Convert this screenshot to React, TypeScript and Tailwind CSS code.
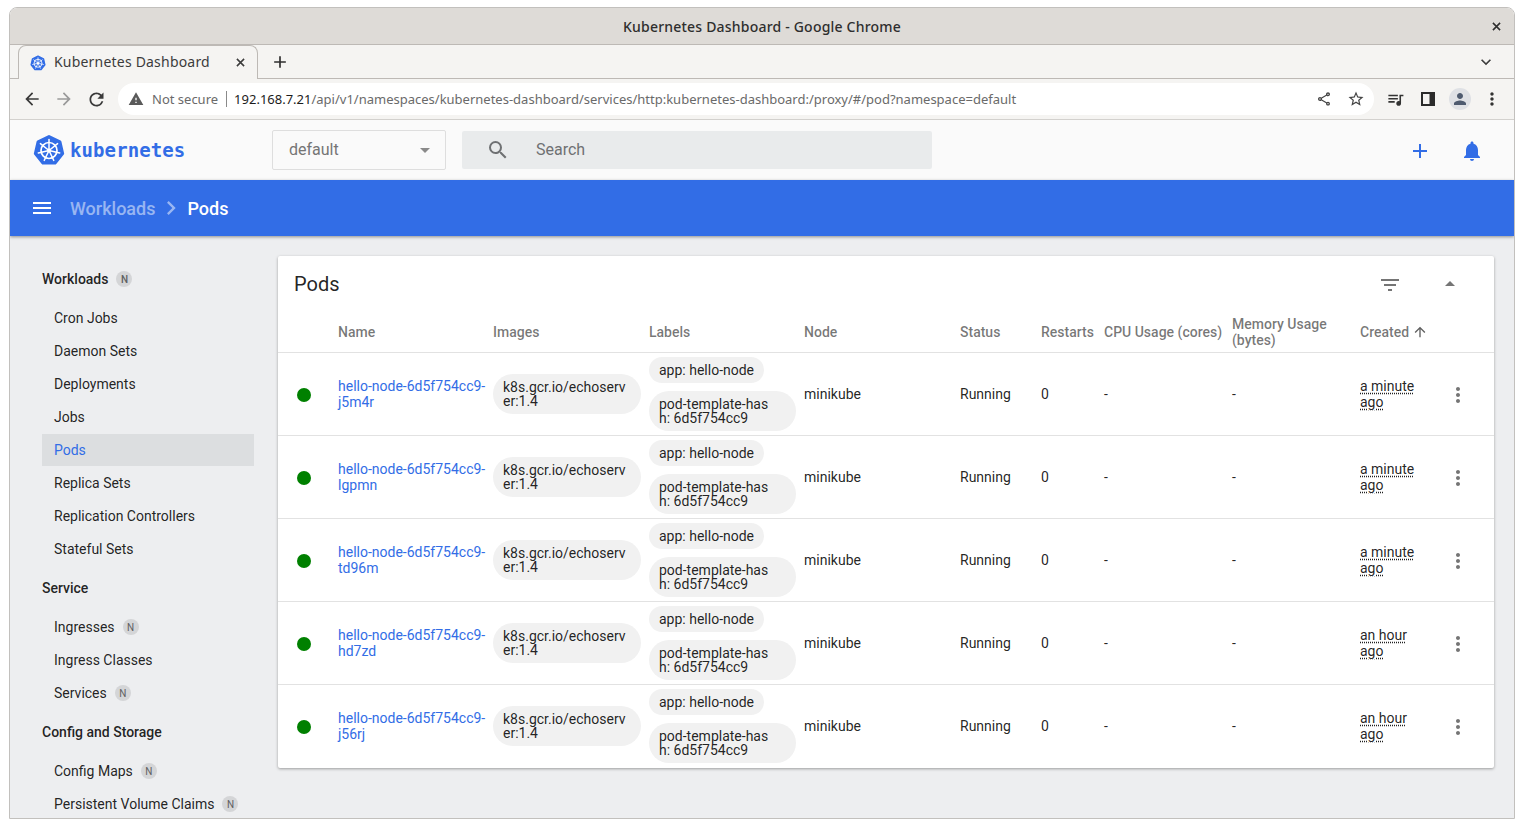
// Kubernetes Dashboard pods page inside a Chrome window
import { ReactNode } from 'react';
import {
  MdAdd,
  MdArrowBack,
  MdArrowDropDown,
  MdArrowDropUp,
  MdArrowForward,
  MdArrowUpward,
  MdChevronRight,
  MdExpandMore,
  MdFilterList,
  MdMenu,
  MdMoreVert,
  MdNotifications,
  MdOutlineShare,
  MdPerson,
  MdQueueMusic,
  MdRefresh,
  MdSearch,
  MdStarBorder,
  MdWarning,
} from 'react-icons/md';

const pods = [
  { suffix: 'j5m4r', age: ['a minute', 'ago'] },
  { suffix: 'lgpmn', age: ['a minute', 'ago'] },
  { suffix: 'td96m', age: ['a minute', 'ago'] },
  { suffix: 'hd7zd', age: ['an hour', 'ago'] },
  { suffix: 'j56rj', age: ['an hour', 'ago'] },
];

const sections = [
  {
    title: 'Workloads',
    badge: true,
    items: [
      { name: 'Cron Jobs' },
      { name: 'Daemon Sets' },
      { name: 'Deployments' },
      { name: 'Jobs' },
      { name: 'Pods', active: true },
      { name: 'Replica Sets' },
      { name: 'Replication Controllers' },
      { name: 'Stateful Sets' },
    ],
  },
  {
    title: 'Service',
    items: [
      { name: 'Ingresses', badge: true },
      { name: 'Ingress Classes' },
      { name: 'Services', badge: true },
    ],
  },
  {
    title: 'Config and Storage',
    items: [
      { name: 'Config Maps', badge: true },
      { name: 'Persistent Volume Claims', badge: true },
    ],
  },
];

const gridCols = 'grid grid-cols-[60px_155px_156px_155px_156px_81px_63px_128px_128px_78px_1fr]';

const heptagon = [0, 1, 2, 3, 4, 5, 6].map((i) => {
  const a = (i * 2 * Math.PI) / 7;
  return `${16 + 14 * Math.sin(a)},${16.5 - 14 * Math.cos(a)}`;
});

function KubeLogo({ size }: { size: number }) {
  return (
    <svg width={size} height={size} viewBox="0 0 32 32">
      <polygon points={heptagon.join(' ')} fill="#326de6" stroke="#326de6" strokeWidth="3" strokeLinejoin="round" />
      <circle cx="16" cy="16.5" r="8" fill="none" stroke="#fff" strokeWidth="1.7" />
      <circle cx="16" cy="16.5" r="2" fill="#fff" />
      {[0, 1, 2, 3, 4, 5, 6].map((i) => {
        const a = (i * 2 * Math.PI) / 7;
        return (
          <line
            key={i}
            x1={16}
            y1={16.5}
            x2={16 + 11 * Math.sin(a)}
            y2={16.5 - 11 * Math.cos(a)}
            stroke="#fff"
            strokeWidth="1.5"
            strokeLinecap="round"
          />
        );
      })}
    </svg>
  );
}

function CloseIcon({ size, className }: { size: number; className?: string }) {
  return (
    <svg className={className} width={size} height={size} viewBox="0 0 10 10" stroke="currentColor" strokeWidth="1.7">
      <path d="M1 1 9 9M9 1 1 9" />
    </svg>
  );
}

function Badge() {
  return (
    <span className="ml-2 flex h-4 w-4 items-center justify-center rounded-full bg-[#d4d5d7] text-[10px] text-[#5f6062]">
      N
    </span>
  );
}

function Chip({ children, className }: { children: ReactNode; className: string }) {
  return (
    <div className={`whitespace-nowrap rounded-[20px] bg-[#f1f1f1] px-2.5 py-[6px] text-[14px] leading-[14px] ${className}`}>
      {children}
    </div>
  );
}

function ChromeFrame() {
  return (
    <div className="font-['Noto_Sans',sans-serif]">
      {/* Title bar */}
      <div className="relative flex h-[37px] items-center justify-center border-b border-[#bdb9b5] bg-[#dedbd7] text-[14px] font-medium tracking-[0.2px] text-[#2e2e2e]">
        Kubernetes Dashboard - Google Chrome
        <CloseIcon className="absolute right-[13px] top-[14px] text-[#2e2e2e]" size={9} />
      </div>
      {/* Tab strip */}
      <div className="flex h-[34px] items-end border-b border-[#bdb9b5] bg-[#f5f4f2] pl-[8px] pr-[18px]">
        <div className="-mb-px flex h-[34px] w-[240px] items-center rounded-t-lg border-x border-t border-[#bdb9b5] bg-[#f5f4f2] pl-[11px] pr-[12px]">
          <KubeLogo size={16} />
          <span className="mb-0.5 ml-2 flex-1 text-[14px] tracking-[0.2px] text-[#3c3c3c]">Kubernetes Dashboard</span>
          <CloseIcon className="text-[#3c3c3c]" size={9} />
        </div>
        <MdAdd className="mb-[6px] ml-[12px] text-[#2e2e2e]" size={20} />
        <div className="flex-1" />
        <MdExpandMore className="mb-[6px] text-[#3c3c3c]" size={20} />
      </div>
      {/* Toolbar */}
      <div className="flex h-[41px] items-center border-b border-[#d3d1ce] bg-[#f5f4f2] pl-[12px] pr-[12px]">
        <MdArrowBack className="text-[#3a3a3a]" size={20} />
        <MdArrowForward className="ml-[12px] text-[#9a9a9a]" size={20} />
        <MdRefresh className="ml-[12px] text-[#3a3a3a]" size={21} />
        <div className="ml-[11px] flex h-8 w-[1256px] shrink-0 items-center rounded-full bg-white pl-[10px] pr-[9px] text-[13px]">
          <MdWarning className="text-[#5a5a5a]" size={16} />
          <span className="ml-[8px] mt-px text-[#6a6a6a]">Not secure</span>
          <span className="ml-[8px] mr-[7px] h-4 w-px bg-[#8a8a8a]" />
          <span className="mt-px text-[#1c1c1c]">192.168.7.21</span>
          <span className="mt-px text-[#6a6a6a]">/api/v1/namespaces/kubernetes-dashboard/services/http:kubernetes-dashboard:/proxy/#/pod?namespace=default</span>
          <div className="flex-1" />
          <MdOutlineShare className="text-[#444]" size={16} />
          <MdStarBorder className="ml-[15px] text-[#444]" size={18} />
        </div>
        <MdQueueMusic className="ml-[12px] text-[#333]" size={19} />
        <svg className="ml-[16px]" width="14" height="14" viewBox="0 0 14 14">
          <rect width="14" height="14" fill="#2b2b2b" />
          <rect x="2" y="2" width="6.5" height="10" fill="#f5f4f2" />
        </svg>
        <div className="ml-[14px] flex h-[22px] w-[22px] items-center justify-center rounded-full bg-[#dfe1e5]">
          <MdPerson className="text-[#4f5b6f]" size={18} />
        </div>
        <MdMoreVert className="ml-[11px] text-[#333]" size={20} />
      </div>
    </div>
  );
}

function AppHeader() {
  return (
    <div className="flex h-[60px] items-center bg-[#fafafa] pl-[23px] pr-[30px]">
      <KubeLogo size={32} />
      <span className="ml-[5px] w-[202px] font-['DejaVu_Sans_Mono',monospace] text-[19px] font-bold tracking-[0.1px] text-[#326de6]">kubernetes</span>
      <div className="flex h-10 w-[174px] items-center rounded-[2px] border border-[#dedede] pl-4 pr-[8px] text-[16px] text-[#757575]">
        <span className="flex-1">default</span>
        <MdArrowDropDown className="text-[#8a8a8a]" size={24} />
      </div>
      <div className="ml-4 flex h-[38px] w-[470px] items-center rounded-[2px] bg-[#e9ebec] pl-[24px] text-[16px] text-[#6f7173]">
        <MdSearch className="text-[#6f7173]" size={24} />
        <span className="ml-[26px]">Search</span>
      </div>
      <div className="flex-1" />
      <MdAdd className="mt-px text-[#326de6]" size={24} />
      <MdNotifications className="ml-[28px] mt-px text-[#326de6]" size={24} />
    </div>
  );
}

function Sidebar() {
  return (
    <div className="w-[268px] shrink-0 pl-8 pt-[27px] text-[14px] text-[#000000de]">
      <div className="w-[212px]">
        {sections.map((s) => (
          <div key={s.title} className="mb-[7px]">
            <div className="mb-[7px] flex h-8 items-center font-medium">
              {s.title}
              {s.badge && <Badge />}
            </div>
            <div className="flex flex-col gap-px">
              {s.items.map((item) => (
                <div
                  key={item.name}
                  className={`flex h-8 items-center whitespace-nowrap pl-3 ${item.active ? 'bg-[#dcdee0] text-[#326de6]' : ''}`}
                >
                  {item.name}
                  {item.badge && <Badge />}
                </div>
              ))}
            </div>
          </div>
        ))}
      </div>
    </div>
  );
}

function PodsCard() {
  return (
    <div className="mt-5 h-[512px] flex-1 rounded-[2px] bg-white shadow-[0_1px_3px_rgba(0,0,0,0.35)]">
      <div className="flex h-14 items-center pl-4 pr-[32px]">
        <span className="flex-1 text-[20px] font-normal text-[#000000de]">Pods</span>
        <MdFilterList className="mt-0.5 text-[#757575]" size={24} />
        <MdArrowDropUp className="ml-[36px] text-[#757575]" size={24} />
      </div>
      <div className={`${gridCols} h-[41px] items-center border-b border-[#e2e2e2] text-[14px] font-medium leading-4 text-[#0000008a]`}>
        <div />
        <div>Name</div>
        <div>Images</div>
        <div>Labels</div>
        <div>Node</div>
        <div>Status</div>
        <div>Restarts</div>
        <div className="whitespace-nowrap">CPU Usage (cores)</div>
        <div>
          Memory Usage
          <br />
          (bytes)
        </div>
        <div className="flex items-center">
          Created
          <MdArrowUpward className="ml-[3px] text-[#5f5f5f]" size={16} />
        </div>
        <div />
      </div>
      {pods.map((p) => (
        <div
          key={p.suffix}
          className={`${gridCols} h-[83px] items-center border-b border-[#e2e2e2] text-[14px] leading-4 text-[#000000de] last:border-transparent`}
        >
          <div className="mt-0.5 pl-[19px]">
            <div className="h-[14px] w-[14px] rounded-full bg-[#008000]" />
          </div>
          <div className="text-[#326de6]">
            hello-node-6d5f754cc9-
            <br />
            {p.suffix}
          </div>
          <div>
            <Chip className="w-[148px]">
              k8s.gcr.io/echoserv
              <br />
              er:1.4
            </Chip>
          </div>
          <div className="flex flex-col items-start gap-2">
            <Chip className="w-fit">app: hello-node</Chip>
            <Chip className="w-[147px]">
              pod-template-has
              <br />
              h: 6d5f754cc9
            </Chip>
          </div>
          <div>minikube</div>
          <div>Running</div>
          <div>0</div>
          <div>-</div>
          <div>-</div>
          <div>
            <span className="underline decoration-dotted underline-offset-2">{p.age[0]}</span>
            <br />
            <span className="underline decoration-dotted underline-offset-2">{p.age[1]}</span>
          </div>
          <div className="mt-0.5 pl-[8px]">
            <MdMoreVert className="text-[#757575]" size={24} />
          </div>
        </div>
      ))}
    </div>
  );
}

export default function App() {
  return (
    <div className="h-[828px] w-[1524px] overflow-hidden bg-white pb-[9px] pl-[9px] pr-[9px] pt-[7px] font-['Roboto',sans-serif]">
      <div className="flex h-full flex-col overflow-hidden rounded-t-[8px] border border-[#c2c0bd]">
        <ChromeFrame />
        <AppHeader />
        <div className="z-10 flex h-14 shrink-0 items-center bg-[#326de6] pl-[20px] text-[18px] font-medium text-white shadow-[0_1px_3px_rgba(0,0,0,0.4)]">
          <MdMenu size={24} />
          <span className="ml-[16px] text-[#ffffff80]">Workloads</span>
          <MdChevronRight className="mx-[2px] text-[#ffffff80]" size={28} />
          <span>Pods</span>
        </div>
        <div className="flex min-h-0 flex-1 overflow-hidden bg-[#edeef0] pr-5">
          <Sidebar />
          <PodsCard />
        </div>
      </div>
    </div>
  );
}
